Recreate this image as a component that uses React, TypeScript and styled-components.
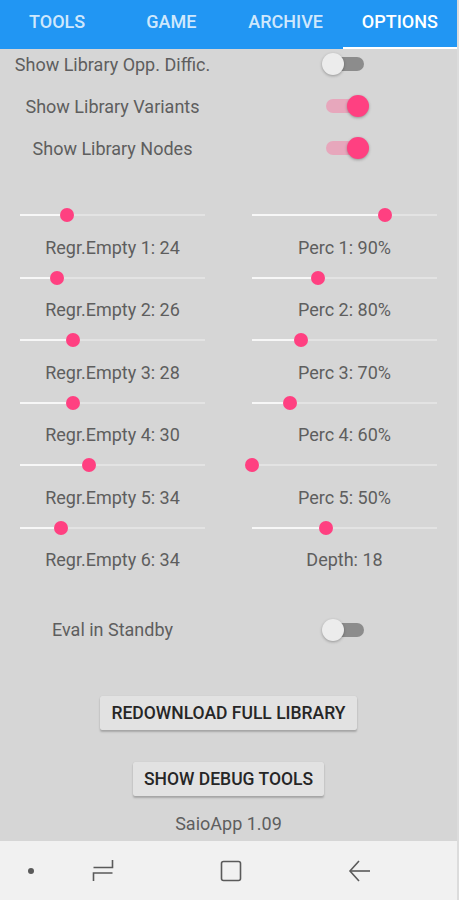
import { FC, Fragment } from 'react'
import styled, { createGlobalStyle } from 'styled-components'

const GlobalStyle = createGlobalStyle`
  html, body {
    margin: 0;
    padding: 0;
    background: #d6d6d6;
    font-family: Roboto, "Noto Sans", sans-serif;
  }
  * {
    box-sizing: border-box;
  }
`

const Screen = styled.div`
  display: flex;
  flex-direction: column;
  width: 459px;
  height: 900px;
  background: #d6d6d6;
  border-right: 2px solid #dcdcdc;
  overflow: hidden;
`

const TabBar = styled.div`
  display: grid;
  grid-template-columns: repeat(4, 1fr);
  height: 49px;
  background: #2196f3;
  flex-shrink: 0;
`

const Tab = styled.div<{ active?: boolean }>`
  display: flex;
  align-items: center;
  justify-content: center;
  padding-bottom: 5px;
  font-size: 18px;
  font-weight: 500;
  color: ${({ active }) => (active ? '#ffffff' : 'rgba(255, 255, 255, 0.8)')};
  border-bottom: 2px solid ${({ active }) => (active ? '#ffffff' : 'transparent')};
`

const Content = styled.div`
  flex: 1;
  display: flex;
  flex-direction: column;
`

const Grid = styled.div`
  display: grid;
  grid-template-columns: 225px 1fr;
  column-gap: 7px;
`

const SwitchGrid = styled(Grid)`
  row-gap: 12px;
  grid-auto-rows: 30px;
`

const Label = styled.div`
  display: flex;
  align-items: center;
  justify-content: center;
  font-size: 18px;
  color: #5e5e5e;
  white-space: nowrap;
`

const SwitchCell = styled.div`
  display: flex;
  align-items: center;
  justify-content: center;
`

const Track = styled.div<{ on: boolean }>`
  position: relative;
  width: 38px;
  height: 14px;
  border-radius: 7px;
  background: ${({ on }) => (on ? '#e7a7bc' : '#8c8c8c')};
`

const Thumb = styled.div<{ on: boolean }>`
  position: absolute;
  top: -4px;
  left: ${({ on }) => (on ? '21px' : '-4px')};
  width: 22px;
  height: 22px;
  border-radius: 50%;
  background: ${({ on }) => (on ? '#ff4081' : '#ececec')};
  box-shadow: 0 1px 3px rgba(0, 0, 0, 0.3);
`

const SliderGrid = styled(Grid)`
  margin-top: 38px;
  row-gap: 6.5px;
`

const SliderBlock = styled.div`
  display: flex;
  flex-direction: column;
  align-items: center;
  gap: 8px;
`

const SliderBox = styled.div`
  position: relative;
  width: 185px;
  height: 28px;
  display: flex;
  align-items: center;
`

const Rail = styled.div`
  width: 100%;
  height: 2px;
  background: #e3e3e3;
`

const Fill = styled.div`
  position: absolute;
  left: 0;
  top: 13px;
  height: 2px;
  background: #f7f7f7;
`

const Knob = styled.div`
  position: absolute;
  top: 7px;
  width: 14px;
  height: 14px;
  margin-left: -7px;
  border-radius: 50%;
  background: #ff4081;
`

const SliderLabel = styled(Label)`
  height: 20px;
`

const StandbyGrid = styled(SwitchGrid)`
  margin-top: 45px;
`

const Button = styled.button<{ top: number }>`
  align-self: center;
  margin-top: ${({ top }) => top}px;
  height: 34px;
  padding: 0 11px;
  border: none;
  border-radius: 2px;
  background: #e2e2e2;
  box-shadow: 0 2px 2px rgba(0, 0, 0, 0.22), 0 0 1px rgba(0, 0, 0, 0.12);
  font-family: Roboto, "Noto Sans", sans-serif;
  font-size: 17.5px;
  font-weight: 500;
  color: #262626;
  text-transform: uppercase;
`

const Version = styled.div`
  margin-top: 18px;
  height: 20px;
  line-height: 20px;
  text-align: center;
  font-size: 18px;
  color: #5e5e5e;
`

const NavBar = styled.div`
  height: 59px;
  flex-shrink: 0;
  background: #f1f1f1;
  display: grid;
  grid-template-columns: 62px 82px 174px 84px 1fr;
  align-items: center;
`

const NavIcon = styled.div`
  display: flex;
  justify-content: center;
  align-items: center;
  color: #5a5a5a;
`

type SwitchProps = { label: string; on: boolean }

const SwitchRow: FC<SwitchProps> = ({ label, on }) => (
  <>
    <Label>{label}</Label>
    <SwitchCell>
      <Track on={on}>
        <Thumb on={on} />
      </Track>
    </SwitchCell>
  </>
)

type SliderProps = { label: string; value: number }

const Slider: FC<SliderProps> = ({ label, value }) => (
  <SliderBlock>
    <SliderBox>
      <Rail />
      <Fill style={{ width: `${value * 100}%` }} />
      <Knob style={{ left: `${value * 100}%` }} />
    </SliderBox>
    <SliderLabel>{label}</SliderLabel>
  </SliderBlock>
)

const sliders: [string, number, string, number][] = [
  ['Regr.Empty 1: 24', 0.254, 'Perc 1: 90%', 0.72],
  ['Regr.Empty 2: 26', 0.2, 'Perc 2: 80%', 0.359],
  ['Regr.Empty 3: 28', 0.286, 'Perc 3: 70%', 0.266],
  ['Regr.Empty 4: 30', 0.286, 'Perc 4: 60%', 0.207],
  ['Regr.Empty 5: 34', 0.373, 'Perc 5: 50%', 0],
  ['Regr.Empty 6: 34', 0.222, 'Depth: 18', 0.402],
]

const App: FC = () => {
  return (
    <>
      <GlobalStyle />
      <Screen>
        <TabBar>
          <Tab>TOOLS</Tab>
          <Tab>GAME</Tab>
          <Tab>ARCHIVE</Tab>
          <Tab active>OPTIONS</Tab>
        </TabBar>
        <Content>
          <SwitchGrid>
            <SwitchRow label="Show Library Opp. Diffic." on={false} />
            <SwitchRow label="Show Library Variants" on />
            <SwitchRow label="Show Library Nodes" on />
          </SwitchGrid>
          <SliderGrid>
            {sliders.map(([l, lv, r, rv]) => (
              <Fragment key={l}>
                <Slider label={l} value={lv} />
                <Slider label={r} value={rv} />
              </Fragment>
            ))}
          </SliderGrid>
          <StandbyGrid>
            <SwitchRow label="Eval in Standby" on={false} />
          </StandbyGrid>
          <Button top={51}>Redownload Full Library</Button>
          <Button top={32}>Show Debug Tools</Button>
          <Version>SaioApp 1.09</Version>
        </Content>
        <NavBar>
          <NavIcon>
            <svg width="8" height="8" viewBox="0 0 8 8">
              <circle cx="4" cy="4" r="3" fill="currentColor" />
            </svg>
          </NavIcon>
          <NavIcon>
            <svg width="24" height="26" viewBox="0 0 24 26" fill="none" stroke="currentColor" strokeWidth="1.6">
              <path d="M21.5 2v7.5H2.5" />
              <path d="M21.5 15H2.5v8" />
            </svg>
          </NavIcon>
          <NavIcon>
            <svg width="24" height="24" viewBox="0 0 24 24" fill="none" stroke="currentColor" strokeWidth="1.6">
              <rect x="2.5" y="2.5" width="19" height="19" rx="2" />
            </svg>
          </NavIcon>
          <NavIcon>
            <svg width="24" height="24" viewBox="0 0 24 24" fill="none" stroke="currentColor" strokeWidth="1.6">
              <path d="M11 2L2 12l9 10" />
              <path d="M2 12h20" />
            </svg>
          </NavIcon>
          <NavIcon />
        </NavBar>
      </Screen>
    </>
  )
}

export default App
